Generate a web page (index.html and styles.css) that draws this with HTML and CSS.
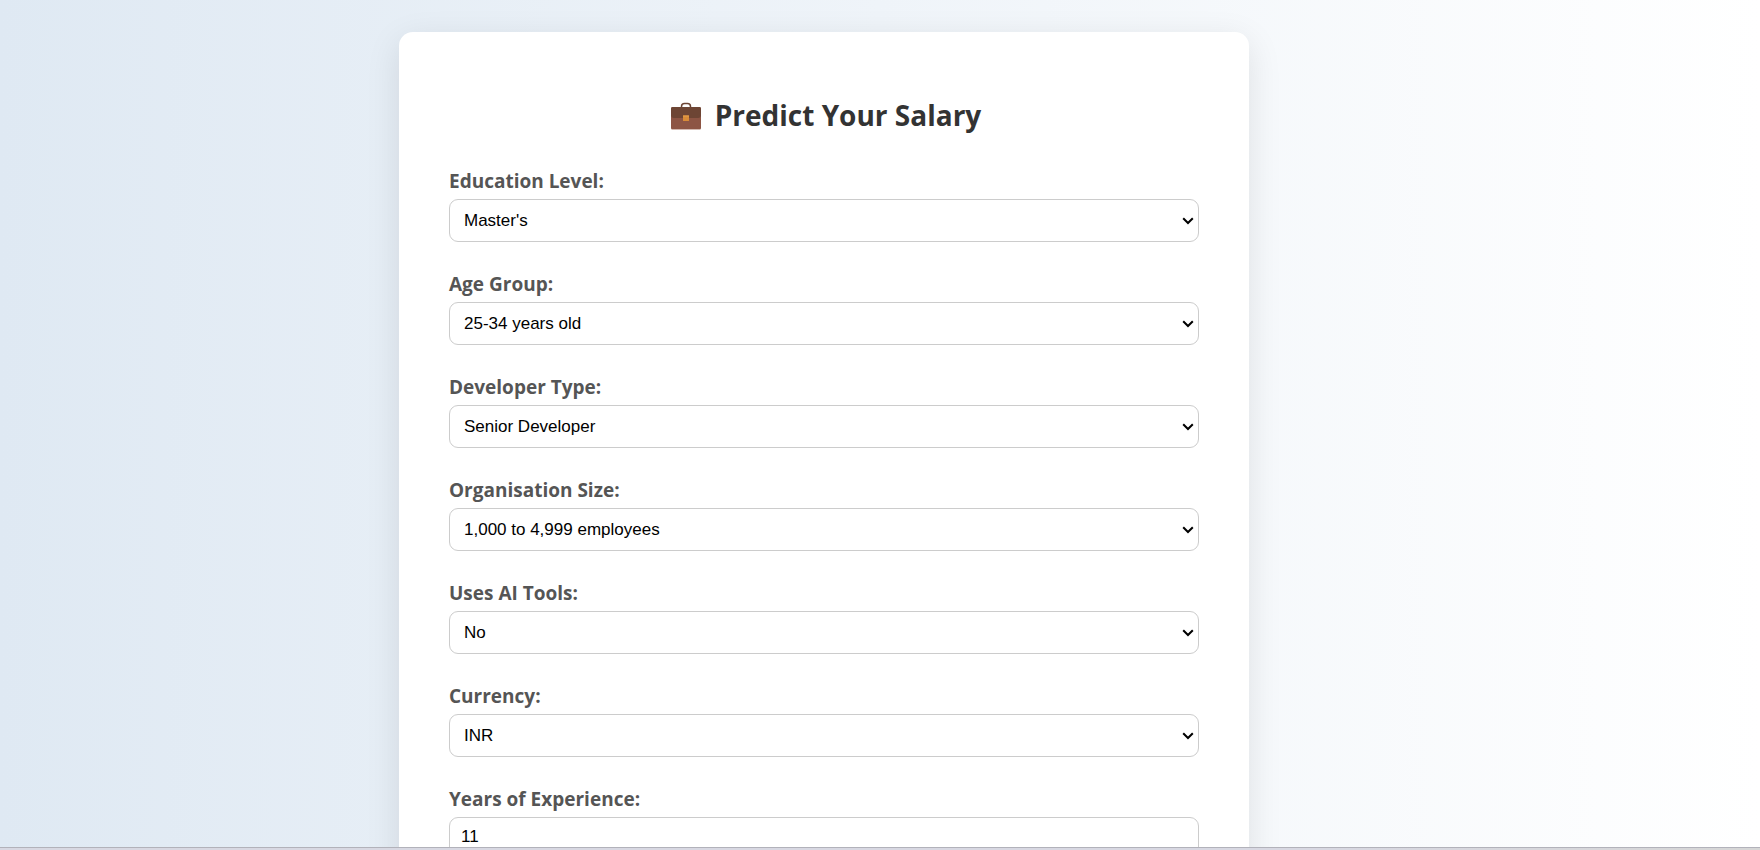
FILE: index.html
```html
<!DOCTYPE html>
<html lang="en">
<head>
<meta charset="utf-8">
<title>Predict Your Salary</title>
<link rel="stylesheet" href="styles.css">
</head>
<body>
<div class="shell">
  <main class="viewport">
    <form class="card">
      <h1 class="title">
        <svg class="title-icon" viewBox="-3 -2 35 32" aria-hidden="true">
          <path d="M11.500 6.500V5.500Q11.500 2.500 14.500 2.500H17.500Q20.500 2.500 20.500 5.500V6.500" fill="none" stroke="#6d4534" stroke-width="1.500"/>
          <rect x="1" y="6" width="30" height="22.500" rx="1.500" fill="#8d5544"/>
          <path d="M1 7.500Q1 6 2.500 6H29.500Q31 6 31 7.500V14Q31 17 28 17H4Q1 17 1 14Z" fill="#6d4534"/>
          <path d="M2 28.500H30" stroke="#d3b9b0" stroke-width="1"/>
          <rect x="13" y="14.500" width="6" height="5.500" rx="0.500" fill="#d98c38"/>
          <path d="M13 15H19" stroke="#e8a14d" stroke-width="1"/>
        </svg>
        <span>Predict Your Salary</span>
      </h1>
      <div class="field">
        <label for="education">Education Level:</label>
        <select id="education" class="control"><option>Master's</option></select>
      </div>
      <div class="field">
        <label for="age">Age Group:</label>
        <select id="age" class="control"><option>25-34 years old</option></select>
      </div>
      <div class="field">
        <label for="devtype">Developer Type:</label>
        <select id="devtype" class="control"><option>Senior Developer</option></select>
      </div>
      <div class="field">
        <label for="orgsize">Organisation Size:</label>
        <select id="orgsize" class="control"><option>1,000 to 4,999 employees</option></select>
      </div>
      <div class="field">
        <label for="ai">Uses AI Tools:</label>
        <select id="ai" class="control"><option>No</option></select>
      </div>
      <div class="field">
        <label for="currency">Currency:</label>
        <select id="currency" class="control"><option>INR</option></select>
      </div>
      <div class="field">
        <label for="years">Years of Experience:</label>
        <input id="years" class="control" type="number" value="11">
      </div>
    </form>
  </main>
  <div class="edge"></div>
</div>
</body>
</html>
```
FILE: styles.css
```css
* {
  box-sizing: border-box;
}

body {
  margin: 0;
  font-family: "Open Sans", "Noto Sans", sans-serif;
}

.shell {
  display: flex;
  flex-direction: column;
  height: 100vh;
}

.viewport {
  flex: 1;
  min-height: 0;
  overflow: hidden;
  padding: 32px 112px 0 0;
  background: linear-gradient(to right, #dfe9f3, #ffffff);
}

.card {
  max-width: 850px;
  margin: 0 auto;
  padding: 64px 50px 50px;
  background: #fff;
  border-radius: 14px;
  box-shadow: 0 9px 34px rgba(0, 0, 0, 0.1);
}

.title {
  display: flex;
  align-items: center;
  justify-content: center;
  gap: 13px;
  margin: 0 0 35px;
  color: #333;
  font-size: 28px;
  font-weight: 700;
  line-height: 38px;
}

.title-icon {
  width: 35px;
  height: 32px;
}

.field {
  display: flex;
  flex-direction: column;
  gap: 5px;
  margin-bottom: 30px;
}

.field label {
  color: #555;
  font-size: 19px;
  font-weight: 700;
  line-height: 25px;
}

.control {
  width: 100%;
  height: 40px;
  padding: 0 11px;
  border: 1px solid #ccc;
  border-radius: 9px;
  background-color: #fff;
  color: #000;
  font-family: "Liberation Sans", Arial, sans-serif;
  font-size: 17px;
}

select.control {
  appearance: none;
  height: 43px;
  padding: 0 24px 0 14px;
  background-image: url("data:image/svg+xml,%3Csvg xmlns='http://www.w3.org/2000/svg' width='12' height='8' viewBox='0 0 12 8'%3E%3Cpath d='M1.200 1.200 6 6 10.800 1.200' fill='none' stroke='%23000' stroke-width='2'/%3E%3C/svg%3E");
  background-repeat: no-repeat;
  background-position: right 4px center;
}

.edge {
  height: 3px;
  border-top: 1px solid #b2b2ba;
  background: linear-gradient(to right, #d8d8e2, #d8d8e2 75%, #d6d6d6);
}
```
